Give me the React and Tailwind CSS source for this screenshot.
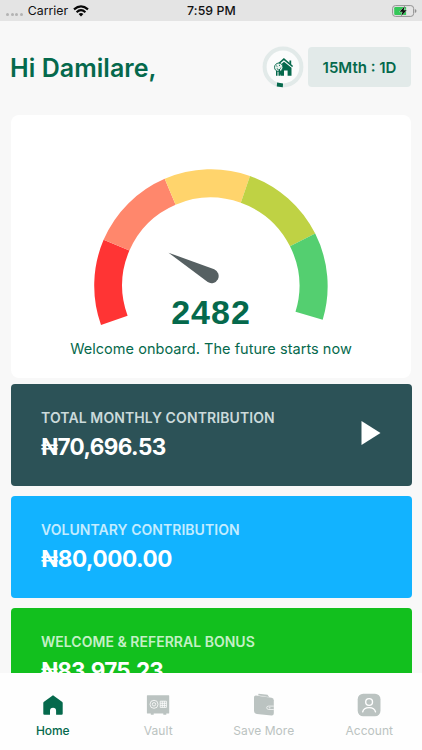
import React, { useState } from "react";
import { clsx } from "clsx";

const segments = [
  { color: "#ff3434", d: "M101 325A117 117 0 0 1 103.6 239.8L129.4 250.5A88.5 88.5 0 0 0 127.6 315.8Z" },
  { color: "#ff876c", d: "M103.6 239.8A117 117 0 0 1 164.7 178.8L175.6 204.7A88.5 88.5 0 0 0 129.4 250.5Z" },
  { color: "#ffd46c", d: "M164.7 178.8A117 117 0 0 1 250 175.9L240.8 202.8A88.5 88.5 0 0 0 175.6 204.7Z" },
  { color: "#bfd244", d: "M250 175.9A117 117 0 0 1 315.2 233.6L290 246.3A88.5 88.5 0 0 0 240.8 202.8Z" },
  { color: "#54cf70", d: "M315.2 233.6A117 117 0 0 1 322.7 319.8L295.5 311.8A88.5 88.5 0 0 0 290 246.3Z" },
];

const balances = [
  { label: "TOTAL MONTHLY CONTRIBUTION", amount: "₦70,696.53", bg: "bg-[#2c5257]", labelColor: "text-[#cbdadb]", labelTracking: "tracking-[0.1px]", amountTracking: "tracking-[-0.6px]", play: true },
  { label: "VOLUNTARY CONTRIBUTION", amount: "₦80,000.00", bg: "bg-[#12b3ff]", labelColor: "text-[#c4ecff]", labelTracking: "tracking-[0.04px]", amountTracking: "tracking-[-0.4px]" },
  { label: "WELCOME & REFERRAL BONUS", amount: "₦83,975.23", bg: "bg-[#12c01e]", labelColor: "text-[#c4f0c7]", labelTracking: "tracking-[0.02px]", amountTracking: "tracking-[-0.8px]" },
];

const HomeIcon = () => (
  <svg width="24" height="24" viewBox="0 0 24 24" fill="currentColor">
    <path d="M12 2.2 21 8.7Q21.7 9.2 21.7 10V20.7Q21.7 21.8 20.6 21.8H15.1V17.8A3 3 0 0 0 9 17.8V21.8H3.4Q2.3 21.8 2.3 20.7V10Q2.3 9.2 3 8.7Z" />
  </svg>
);

const VaultIcon = () => (
  <svg width="24" height="24" viewBox="0 0 24 24">
    <path fill="currentColor" d="M1.4 2.3h21.3q.5 0 .5.5v17.3q0 .5-.5.5h-2.4v1.2h-3v-1.2H7.7v1.2H4.8v-1.2H1.4q-.5 0-.5-.5V2.8q0-.5.5-.5z" />
    <g fill="none" stroke="#fff" strokeWidth="0.8">
      <circle cx="8" cy="11.3" r="4" />
      <circle cx="8" cy="11.3" r="1.7" />
      <path d="M14.2 8.2h6.2v6.2h-6.2zM16.3 8.2v6.2M18.4 8.2v6.2M14.2 10.3h6.2M14.2 12.4h6.2" />
    </g>
  </svg>
);

const WalletIcon = () => (
  <svg width="24" height="24" viewBox="0 0 24 24">
    <path fill="currentColor" d="M2 4.2Q2 2.5 4 2.6L19.5 4.8Q21.8 5.2 21.8 7.3V20.3Q21.8 22.7 19.5 22.5L4.8 20.9Q2 20.5 2 18Z" />
    <path fill="currentColor" d="M6 2.6 6.6.8 15.5 1.7 17.4 4.6Z" />
    <path d="M6 2.4 16.5 4" stroke="#fff" strokeWidth="0.3" />
    <path d="M21.8 13.1H16.5Q14.7 13.2 14.7 14.7T16.5 16.5H21.8" fill="none" stroke="#fff" strokeWidth="0.7" />
    <path d="M16.8 14.8h1.6" stroke="#fff" strokeWidth="0.8" />
  </svg>
);

const AccountIcon = () => (
  <svg width="24" height="24" viewBox="0 0 24 24">
    <rect x="0.7" y="0.7" width="22.8" height="22.6" rx="5.5" fill="currentColor" />
    <g fill="none" stroke="#fff" strokeWidth="1.4" strokeLinecap="round">
      <circle cx="12.1" cy="9" r="3.4" />
      <path d="M5.7 18.8a6.5 5.1 0 0 1 12.8 0" />
    </g>
  </svg>
);

const tabs = [
  { name: "Home", icon: HomeIcon },
  { name: "Vault", icon: VaultIcon },
  { name: "Save More", icon: WalletIcon },
  { name: "Account", icon: AccountIcon },
];

const StatusBar = () => (
  <div className="grid h-[21px] shrink-0 grid-cols-3 items-center bg-[#e4e4e4] pl-[6px] pr-[5px] text-[12.3px] text-[#111]">
    <div className="flex items-center pt-px">
      <div className="mr-[5px] mt-[6px] flex gap-[1.6px]">
        {[0, 1, 2, 3].map((dot) => (
          <span key={dot} className="h-[3px] w-[3px] rounded-full bg-[#b3b3b3]" />
        ))}
      </div>
      <span>Carrier</span>
      <svg className="ml-[5px]" width="16" height="12" viewBox="0 0 16 12" fill="none" stroke="#080808" strokeWidth="2.2">
        <path d="M1 4.4Q8-1.8 15 4.4" />
        <path d="M3.6 7.2Q8 3.2 12.4 7.2" />
        <path d="M5.6 9.1Q8 7 10.4 9.1L8 11.6Z" fill="#080808" stroke="none" />
      </svg>
    </div>
    <div className="pt-px text-center font-medium tracking-[0.1px]">7:59 PM</div>
    <div className="flex justify-end">
      <svg width="25" height="12" viewBox="0 0 25 12">
        <rect x="0.6" y="0.6" width="21" height="10.8" rx="2.8" fill="none" stroke="#929292" />
        <path d="M3.4 2h10.7v8H3.4q-1.2 0-1.2-1.2V3.2Q2.2 2 3.4 2z" fill="#35c759" />
        <path d="M22.8 4v4q1.7-.7 1.7-2t-1.7-2z" fill="#929292" />
        <path d="M12.9 1 7.6 6.7h3L9.2 11l5.5-5.8h-3.1z" fill="#0b0b0b" stroke="#e4e4e4" strokeWidth="0.8" paintOrder="stroke" />
      </svg>
    </div>
  </div>
);

const GoalRing = () => (
  <svg width="42" height="42" viewBox="0 0 42 42" className="shrink-0">
    <circle cx="21" cy="21" r="18.4" fill="#fbfcfc" stroke="#e2eae9" strokeWidth="4" />
    <path d="M15.1 36.6 21 37.4 20.8 41.3 14.8 40.5Z" fill="#05694c" />
    <path d="M16.2 21 22 15.8 29.5 21.8V29.7H25.6V24.6H22V29.7H18.5Z" fill="#05694c" />
    <path d="M16.2 18 21.9 13.1 30.6 20.5" fill="none" stroke="#05694c" strokeWidth="1.6" />
    <path d="M27.4 14.4h1.8v4.4l-1.8-1.5z" fill="#05694c" />
    <circle cx="16.7" cy="21.3" r="4.2" fill="#e9f1ee" stroke="#05694c" strokeWidth="0.9" />
    <path d="M14.3 19.8l1.1.8M17 18.9l1 .9M19.2 21.6l-1 .9M14.8 22.8l1.2.4" stroke="#05694c" strokeWidth="1" />
    <path d="M14 25h1.5v4.7H14zM16.5 23h1.5v6.7h-1.5z" fill="#05694c" />
  </svg>
);

const ScoreCard = () => (
  <section className="mx-[11px] flex h-[263px] shrink-0 flex-col items-center rounded-[8px] bg-white pt-[51px] text-[#05694c]">
    <svg className="shrink-0" width="240" height="162" viewBox="91 166 240 162">
      {segments.map((segment) => (
        <path key={segment.color} d={segment.d} fill={segment.color} />
      ))}
      <path d="M168.5 252.7 214.2 269.3A7.2 7.2 0 1 1 207.7 282.1Z" fill="#566062" />
    </svg>
    <div className="-mt-[36px] font-['Liberation_Sans',Arial,sans-serif] text-[34px] font-bold leading-[40px] tracking-[1px]">
      2482
    </div>
    <p className="mt-[7px] whitespace-nowrap text-[14.5px] leading-[20px] tracking-[0.04px]">
      Welcome onboard. The future starts now
    </p>
  </section>
);

const BalanceCard = ({ label, amount, bg, labelColor, labelTracking, amountTracking, play }) => (
  <section className={clsx("flex h-[102px] shrink-0 items-center justify-between rounded-[4px] pl-[30.5px] pr-[31px]", bg)}>
    <div className="-mt-px whitespace-nowrap">
      <div className={clsx("text-[14px] font-semibold leading-[20px]", labelColor, labelTracking)}>{label}</div>
      <div className={clsx("mt-[4px] text-[22.5px] font-bold leading-[30px] text-white", amountTracking)}>{amount}</div>
    </div>
    {play && (
      <svg width="20" height="26" viewBox="0 0 20 26" className="-mt-[4px]">
        <path d="M0.5 1v24L19.5 13z" fill="#fff" />
      </svg>
    )}
  </section>
);

const App = () => {
  const [activeTab, setActiveTab] = useState("Home");

  return (
    <div className="flex h-[750px] w-[422px] flex-col overflow-hidden bg-[#f8f8f8] font-[Inter,'Noto_Sans',sans-serif]">
      <StatusBar />

      <main className="flex min-h-0 flex-1 flex-col overflow-hidden">
        <header className="flex h-[94px] shrink-0 items-center justify-between pl-[10px] pr-[11px]">
          <h1 className="whitespace-nowrap pt-[2px] text-[25px] font-semibold tracking-[0.05px] text-[#05694c]">Hi Damilare,</h1>
          <div className="-mt-[2px] flex items-center gap-[4px]">
            <GoalRing />
            <div className="flex h-[40px] w-[103px] items-center justify-center rounded-[4px] bg-[#e2eae9] pt-[2px] text-[15px] font-semibold text-[#05694c]">
              15Mth : 1D
            </div>
          </div>
        </header>

        <ScoreCard />

        <div className="mt-[6px] flex flex-col gap-[10px] pl-[10.5px] pr-[10.5px]">
          {balances.map((balance) => (
            <BalanceCard key={balance.label} {...balance} />
          ))}
        </div>
      </main>

      {/* Bottom tabs */}
      <nav className="grid h-[77px] shrink-0 grid-cols-4 bg-[#fefefe]">
        {tabs.map(({ name, icon: Icon }) => (
          <button
            key={name}
            type="button"
            onClick={() => setActiveTab(name)}
            className={clsx(
              "flex flex-col items-center pt-[20px]",
              activeTab === name ? "text-[#05694c]" : "text-[#bbc3c1]"
            )}
          >
            <Icon />
            <span
              className={clsx(
                "mt-[4px] whitespace-nowrap text-[12px] leading-[19px]",
                activeTab === name ? "font-medium tracking-[-0.1px]" : "tracking-[0.05px]"
              )}
            >
              {name}
            </span>
          </button>
        ))}
      </nav>
    </div>
  );
};

export default App;
